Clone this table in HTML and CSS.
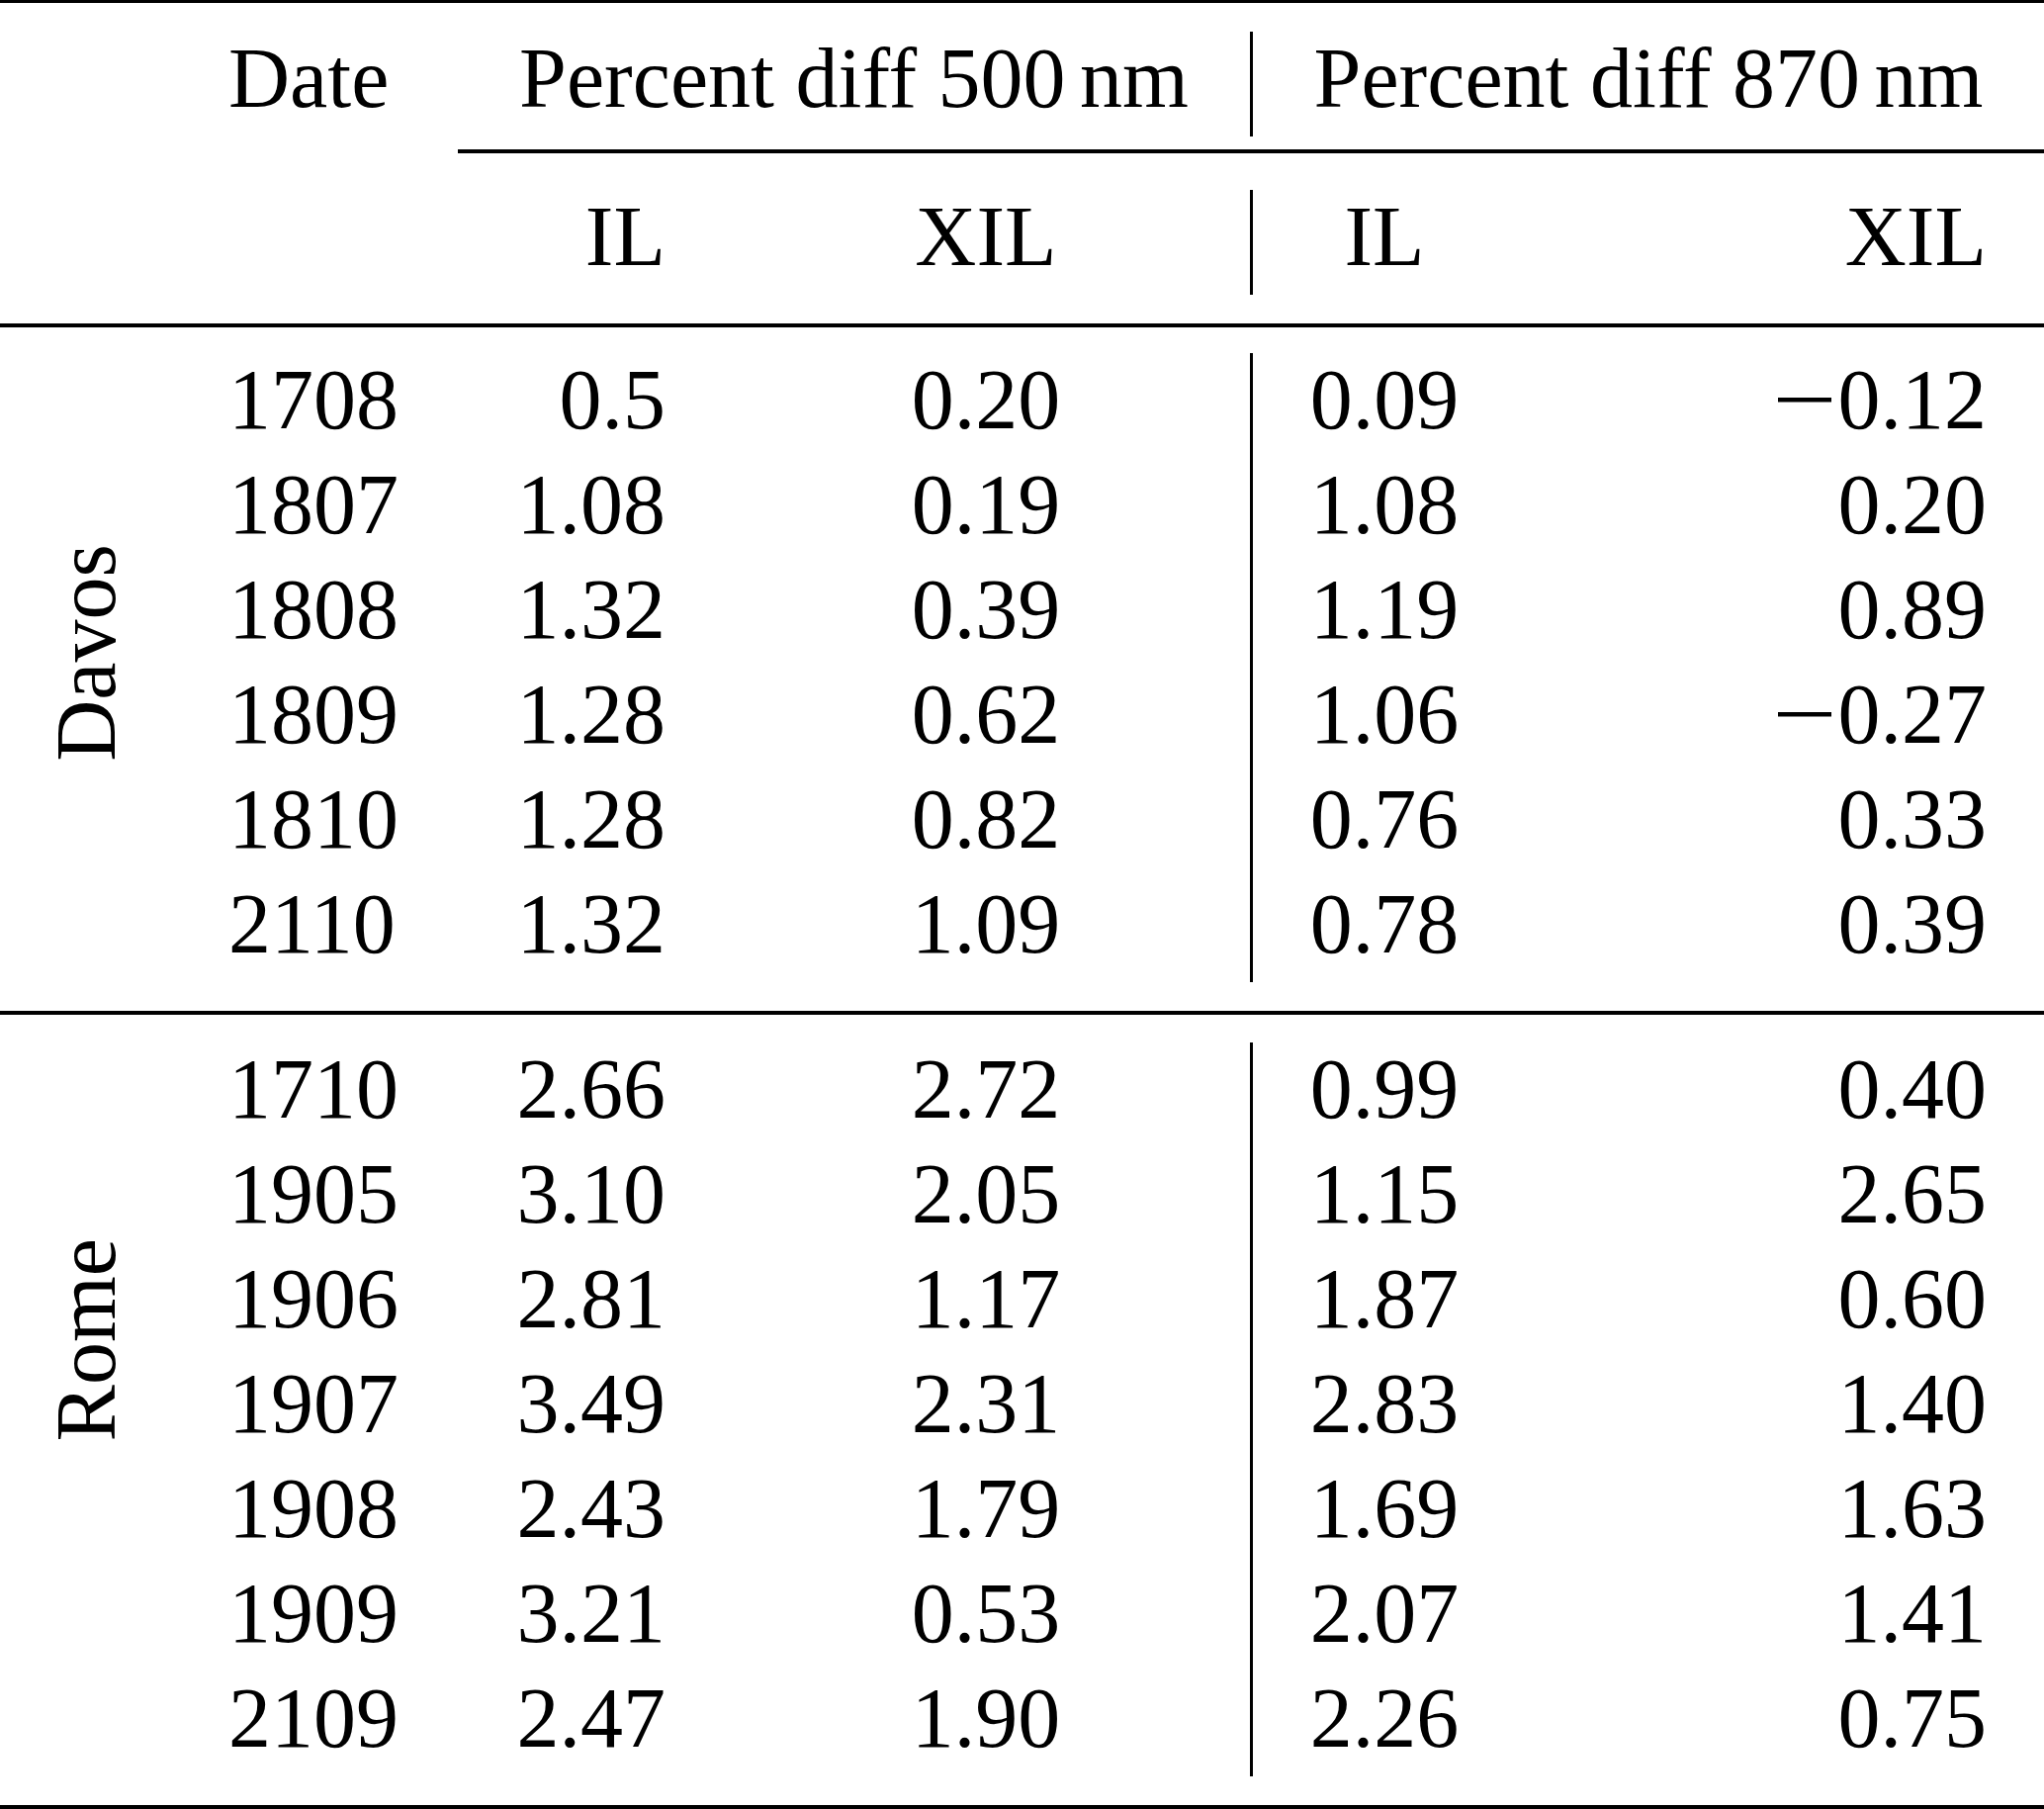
FILE: index.html
```html
<!DOCTYPE html>
<html lang="en">
<head>
<meta charset="utf-8">
<title>Percent differences</title>
<link rel="stylesheet" href="styles.css">
</head>
<body>
<table class="tbl">
  <colgroup>
    <col class="c-site">
    <col class="c-date">
    <col class="c-il5">
    <col class="c-xil5">
    <col class="c-il8">
    <col class="c-xil8">
  </colgroup>
  <tbody>
    <tr><td colspan="6" class="rule rule-top"></td></tr>
    <tr class="row">
      <td></td>
      <td class="date">Date</td>
      <td colspan="2" class="ctr">Percent diff 500<span class="thin"></span>nm</td>
      <td colspan="2" class="ctr v">Percent diff 870<span class="thin"></span>nm</td>
    </tr>
    <tr>
      <td colspan="2"></td>
      <td colspan="4" class="rule rule-cmid"></td>
    </tr>
    <tr class="row">
      <td></td>
      <td></td>
      <td class="r2">IL</td>
      <td class="c3">XIL</td>
      <td class="c4 v">IL</td>
      <td class="r5">XIL</td>
    </tr>
    <tr><td colspan="6" class="rule rule-mid1"></td></tr>

    <tr class="row">
      <td rowspan="6" class="site site-davos"><span class="label">Davos</span></td>
      <td class="date">1708</td><td class="r2">0.5</td><td class="c3">0.20</td><td class="c4 v">0.09</td><td class="r5"><span class="minus">&#8722;</span>0.12</td>
    </tr>
    <tr class="row">
      <td class="date">1807</td><td class="r2">1.08</td><td class="c3">0.19</td><td class="c4 v">1.08</td><td class="r5">0.20</td>
    </tr>
    <tr class="row">
      <td class="date">1808</td><td class="r2">1.32</td><td class="c3">0.39</td><td class="c4 v">1.19</td><td class="r5">0.89</td>
    </tr>
    <tr class="row">
      <td class="date">1809</td><td class="r2">1.28</td><td class="c3">0.62</td><td class="c4 v">1.06</td><td class="r5"><span class="minus">&#8722;</span>0.27</td>
    </tr>
    <tr class="row">
      <td class="date">1810</td><td class="r2">1.28</td><td class="c3">0.82</td><td class="c4 v">0.76</td><td class="r5">0.33</td>
    </tr>
    <tr class="row">
      <td class="date">2110</td><td class="r2">1.32</td><td class="c3">1.09</td><td class="c4 v">0.78</td><td class="r5">0.39</td>
    </tr>

    <tr><td colspan="6" class="rule rule-mid2"></td></tr>

    <tr class="row">
      <td rowspan="7" class="site site-rome"><span class="label">Rome</span></td>
      <td class="date">1710</td><td class="r2">2.66</td><td class="c3">2.72</td><td class="c4 v">0.99</td><td class="r5">0.40</td>
    </tr>
    <tr class="row">
      <td class="date">1905</td><td class="r2">3.10</td><td class="c3">2.05</td><td class="c4 v">1.15</td><td class="r5">2.65</td>
    </tr>
    <tr class="row">
      <td class="date">1906</td><td class="r2">2.81</td><td class="c3">1.17</td><td class="c4 v">1.87</td><td class="r5">0.60</td>
    </tr>
    <tr class="row">
      <td class="date">1907</td><td class="r2">3.49</td><td class="c3">2.31</td><td class="c4 v">2.83</td><td class="r5">1.40</td>
    </tr>
    <tr class="row">
      <td class="date">1908</td><td class="r2">2.43</td><td class="c3">1.79</td><td class="c4 v">1.69</td><td class="r5">1.63</td>
    </tr>
    <tr class="row">
      <td class="date">1909</td><td class="r2">3.21</td><td class="c3">0.53</td><td class="c4 v">2.07</td><td class="r5">1.41</td>
    </tr>
    <tr class="row">
      <td class="date">2109</td><td class="r2">2.47</td><td class="c3">1.90</td><td class="c4 v">2.26</td><td class="r5">0.75</td>
    </tr>

    <tr><td colspan="6" class="rule rule-bottom"></td></tr>
  </tbody>
</table>
</body>
</html>
```

FILE: styles.css
```css
html, body {
  margin: 0;
  padding: 0;
  background: #ffffff;
}

body {
  width: 2067px;
  height: 1829px;
  overflow: hidden;
  color: #000000;
  font-family: "Liberation Serif", "Times New Roman", serif;
  font-size: 86px;
}

.tbl {
  width: 2067px;
  table-layout: fixed;
  border-collapse: separate;
  border-spacing: 0;
}

.c-site { width: 180px; }
.c-date { width: 283px; }
.c-il5  { width: 237px; }
.c-xil5 { width: 564px; }
.c-il8  { width: 269px; }
.c-xil8 { width: 534px; }

.tbl td {
  padding: 0;
  vertical-align: top;
  white-space: nowrap;
}

.row td {
  height: 94px;
  line-height: 94px;
  padding-bottom: 12px;
}

/* rules */
.tbl td.rule {
  height: 4px;
  line-height: 0;
  font-size: 0;
  background: #000000;
  background-clip: content-box;
}
.tbl td.rule-top    { height: 3px; padding: 0 0 29px 0; }
.tbl td.rule-cmid   { padding: 13px 0 37px 0; }
.tbl td.rule-mid1   { padding: 29px 0 26px 0; }
.tbl td.rule-mid2   { padding: 29px 0 28px 0; }
.tbl td.rule-bottom { padding: 29px 0 0 0; }

/* columns */
.tbl td.date { padding-left: 51px; text-align: left; }
.tbl td.r2   { padding-right: 27px; text-align: right; }
.tbl td.c3   { padding-left: 30px; text-align: center; }
.tbl td.c4   { text-align: center; }
.tbl td.r5   { padding-right: 58px; text-align: right; }
.tbl td.ctr  { text-align: center; }

.tbl td.v {
  border-left: 3px solid #000000;
}

.thin {
  display: inline-block;
  width: 0.167em;
}

.minus {
  display: inline-block;
  margin-right: 0.11em;
  transform: scaleX(1.35);
  transform-origin: center;
}

/* rotated site labels */
.tbl td.site {
  vertical-align: middle;
  padding-left: 37px;
  line-height: normal;
  height: auto;
}
.tbl td.site-davos { padding-bottom: 10px; }
.tbl td.site-rome  { padding-bottom: 120px; }

.label {
  display: inline-block;
  writing-mode: vertical-rl;
  transform: rotate(180deg);
  line-height: normal;
}
```
